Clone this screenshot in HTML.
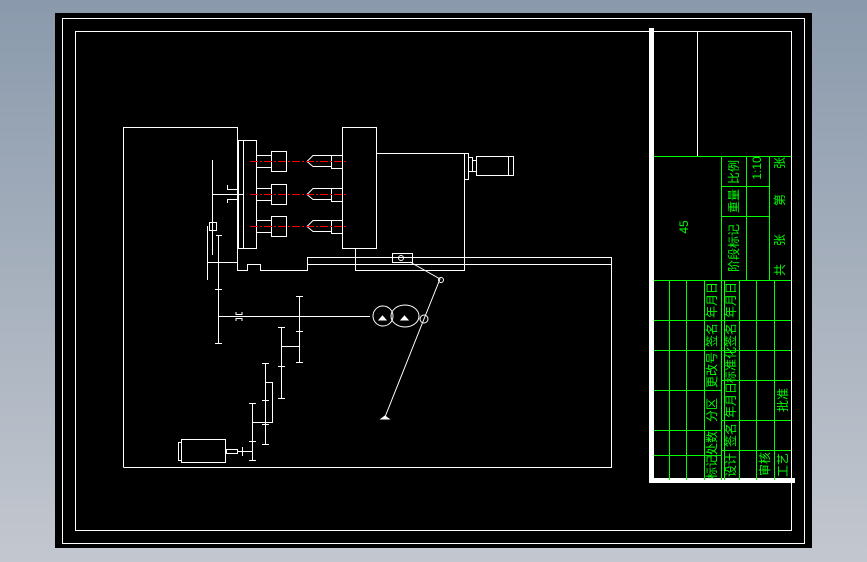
<!DOCTYPE html>
<html><head><meta charset="utf-8"><style>
html,body{margin:0;padding:0}
body{width:867px;height:562px;position:relative;overflow:hidden;background:linear-gradient(#8a9aac,#c3c7cf);font-family:"Liberation Sans","Noto Sans CJK SC",sans-serif}
#cv{position:absolute;left:55px;top:13px;width:757px;height:535px;background:#000}
svg{position:absolute;left:0;top:0}
.t{position:absolute;color:#0f0;font-size:12px;line-height:12px;white-space:nowrap;transform:translate(-50%,-50%) rotate(-90deg)}
</style></head><body>
<div id="cv"></div>
<svg width="867" height="562" viewBox="0 0 867 562" fill="none" stroke="#fff" stroke-width="1">
<rect x="62.5" y="18.5" width="742" height="525"/>
<rect x="75.5" y="31.5" width="716" height="499"/>
<rect x="649" y="28" width="5" height="455" fill="#fff" stroke="none"/>
<rect x="649" y="478" width="146" height="5" fill="#fff" stroke="none"/>
<line x1="697.5" y1="31" x2="697.5" y2="157"/>
<g stroke="#0f0">
<line x1="654" y1="156.5" x2="791" y2="156.5"/>
<line x1="721.5" y1="156" x2="721.5" y2="480"/>
<line x1="746.5" y1="156" x2="746.5" y2="280"/>
<line x1="769.5" y1="156" x2="769.5" y2="280"/>
<line x1="721" y1="186.5" x2="769" y2="186.5"/>
<line x1="721" y1="216.5" x2="769" y2="216.5"/>
<line x1="654" y1="280.5" x2="791" y2="280.5"/>
<line x1="654" y1="320.5" x2="791" y2="320.5"/>
<line x1="654" y1="350.5" x2="791" y2="350.5"/>
<line x1="654" y1="390.5" x2="721" y2="390.5"/>
<line x1="654" y1="430.5" x2="721" y2="430.5"/>
<line x1="654" y1="455.5" x2="721" y2="455.5"/>
<line x1="721" y1="380.5" x2="791" y2="380.5"/>
<line x1="721" y1="420.5" x2="791" y2="420.5"/>
<line x1="721" y1="450.5" x2="791" y2="450.5"/>
<line x1="669.5" y1="280" x2="669.5" y2="480"/>
<line x1="686.5" y1="280" x2="686.5" y2="480"/>
<line x1="704.5" y1="280" x2="704.5" y2="480"/>
<line x1="724.5" y1="280" x2="724.5" y2="480"/>
<line x1="739.5" y1="280" x2="739.5" y2="480"/>
<line x1="756.5" y1="280" x2="756.5" y2="480"/>
<line x1="774.5" y1="280" x2="774.5" y2="480"/>
</g>
<polyline points="123.5,467.5 123.5,127.5 237.5,127.5 237.5,270.5 247.5,270.5 247.5,264.5 260.5,264.5 260.5,270.5 307.5,270.5 307.5,257.5 611.5,257.5 611.5,467.5 123.5,467.5"/>
<line x1="307" y1="264.5" x2="611" y2="264.5"/>
<polyline points="355.5,248 355.5,270.5 464.5,270.5 464.5,153.5 376,153.5"/>
<rect x="238.5" y="140.5" width="5" height="108"/>
<rect x="243.5" y="140.5" width="13" height="108"/>
<rect x="342.5" y="127.5" width="34" height="121"/>
<rect x="464.5" y="153.5" width="4" height="26"/>
<rect x="468.5" y="157.5" width="4" height="14"/>
<rect x="472.5" y="160.5" width="4" height="11"/>
<rect x="476.5" y="156.5" width="37" height="19"/>
<line x1="508.5" y1="156" x2="508.5" y2="176"/>
<g id="sp">
<line x1="256" y1="155.5" x2="271" y2="155.5"/><line x1="256" y1="167.5" x2="271" y2="167.5"/>
<rect x="271.5" y="151.5" width="15" height="20"/>
<polyline points="331,155.5 313,155.5 307,161.5 313,166.5 331,166.5"/>
<rect x="331.5" y="155.5" width="11" height="13"/>
<line x1="250" y1="161.5" x2="348" y2="161.5" stroke="#f00" stroke-dasharray="8,2,2,2"/>
</g>
<use href="#sp" y="33"/>
<use href="#sp" y="65"/>
<line x1="212.5" y1="160" x2="212.5" y2="255"/>
<line x1="212" y1="194.5" x2="243" y2="194.5"/>
<polyline points="227.5,185 227.5,189.5 237,189.5"/>
<polyline points="227.5,203 227.5,199.5 237,199.5"/>
<rect x="209.5" y="222.5" width="7" height="8"/>
<line x1="207.5" y1="226" x2="207.5" y2="280"/>
<line x1="218.5" y1="235" x2="218.5" y2="343"/>
<line x1="216" y1="235.5" x2="222" y2="235.5"/>
<line x1="207" y1="262.5" x2="237" y2="262.5"/>
<line x1="215" y1="289.5" x2="222" y2="289.5"/>
<line x1="215" y1="343.5" x2="222" y2="343.5"/>
<line x1="218" y1="316.5" x2="370" y2="316.5"/>
<polyline points="236,312 236,314.5 242,314.5 242,312"/>
<polyline points="236,321 236,318.5 242,318.5 242,321"/>
<line x1="299.5" y1="296" x2="299.5" y2="362"/>
<line x1="296" y1="296.5" x2="303" y2="296.5"/><line x1="296" y1="362.5" x2="303" y2="362.5"/>
<line x1="296" y1="331.5" x2="303" y2="331.5"/>
<line x1="281.5" y1="327" x2="281.5" y2="398"/>
<line x1="278" y1="327.5" x2="285" y2="327.5"/><line x1="278" y1="398.5" x2="285" y2="398.5"/><line x1="278" y1="366.5" x2="285" y2="366.5"/>
<line x1="281" y1="346.5" x2="299" y2="346.5"/>
<line x1="265.5" y1="363" x2="265.5" y2="444"/>
<line x1="262" y1="363.5" x2="269" y2="363.5"/><line x1="262" y1="444.5" x2="269" y2="444.5"/><line x1="262" y1="400.5" x2="269" y2="400.5"/><line x1="262" y1="424.5" x2="269" y2="424.5"/>
<polyline points="265,382.5 272.5,382.5 272.5,422.5 252,422.5"/>
<line x1="252.5" y1="403" x2="252.5" y2="460"/>
<line x1="249" y1="403.5" x2="256" y2="403.5"/><line x1="249" y1="460.5" x2="256" y2="460.5"/><line x1="249" y1="441.5" x2="256" y2="441.5"/>
<rect x="181.5" y="439.5" width="44" height="23"/>
<rect x="178.5" y="442.5" width="3" height="18"/>
<rect x="226.5" y="449.5" width="11" height="4"/>
<line x1="238" y1="451.5" x2="252" y2="451.5"/>
<line x1="242.5" y1="447" x2="242.5" y2="456"/>
<circle cx="383" cy="316" r="10"/>
<ellipse cx="405" cy="316" rx="14" ry="11"/>
<circle cx="424" cy="319" r="4"/>
<path d="M379,320h7l-3.5,-4z M401,320h7l-3.5,-4z" fill="#fff"/>
<rect x="392.5" y="253.5" width="20" height="9"/>
<circle cx="401" cy="258" r="2.5"/>
<polyline points="410,262 440,279 424,319 385,417"/>
<circle cx="441" cy="280" r="2.5"/>
<path d="M381,419h8l-4,-3z" fill="#fff"/>
</svg>
<div class="t" style="left:684px;top:227px">45</div>
<div class="t" style="left:734px;top:172px">比例</div>
<div class="t" style="left:734px;top:201px">重量</div>
<div class="t" style="left:734px;top:248px">阶段标记</div>
<div class="t" style="left:757px;top:168px">1:10</div>
<div class="t" style="left:780px;top:163px">张</div>
<div class="t" style="left:780px;top:200px">第</div>
<div class="t" style="left:780px;top:240px">张</div>
<div class="t" style="left:780px;top:270px">共</div>
<div class="t" style="left:712px;top:300px">年月日</div>
<div class="t" style="left:712px;top:335px">签名</div>
<div class="t" style="left:712px;top:370px">更改号</div>
<div class="t" style="left:712px;top:410px">分区</div>
<div class="t" style="left:712px;top:455px">标记处数</div>
<div class="t" style="left:731px;top:300px">年月日</div>
<div class="t" style="left:731px;top:335px">签名</div>
<div class="t" style="left:731px;top:365px">标准化</div>
<div class="t" style="left:731px;top:400px">年月日</div>
<div class="t" style="left:731px;top:435px">签名</div>
<div class="t" style="left:731px;top:465px">设计</div>
<div class="t" style="left:765px;top:464px">审核</div>
<div class="t" style="left:783px;top:400px">批准</div>
<div class="t" style="left:783px;top:465px">工艺</div>
</body></html>
